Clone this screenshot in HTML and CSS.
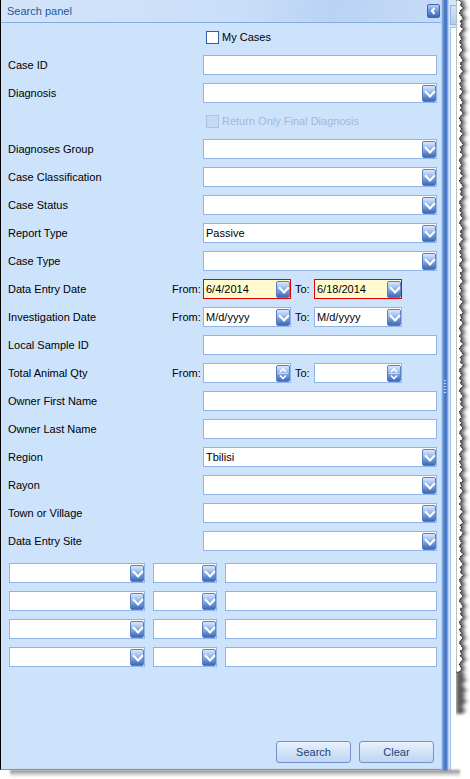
FILE: index.html
```html
<!DOCTYPE html>
<html>
<head>
<meta charset="utf-8">
<title>Search panel</title>
<link rel="stylesheet" href="styles.css">
</head>
<body>
<div class="frame">
  <div class="top">
    <div class="panel">
      <div class="header">
        <span class="title">Search panel</span>
        <span class="collapse"><svg width="9" height="10" viewBox="0 0 9 10"><polyline points="5.5,2 3,5 5.5,8" fill="none" stroke="#fff" stroke-width="2"/></svg></span>
      </div>
      <div class="form">
        <div class="row"><span></span><label class="check"><span class="box"></span>My Cases</label></div>
        <div class="row"><span>Case ID</span><div class="field"></div></div>
        <div class="row"><span>Diagnosis</span><div class="field"><span class="dd-btn"></span></div></div>
        <div class="row"><span></span><label class="check disabled"><span class="box"></span>Return Only Final Diagnosis</label></div>
        <div class="row"><span>Diagnoses Group</span><div class="field"><span class="dd-btn"></span></div></div>
        <div class="row"><span>Case Classification</span><div class="field"><span class="dd-btn"></span></div></div>
        <div class="row"><span>Case Status</span><div class="field"><span class="dd-btn"></span></div></div>
        <div class="row"><span>Report Type</span><div class="field">Passive<span class="dd-btn"></span></div></div>
        <div class="row"><span>Case Type</span><div class="field"><span class="dd-btn"></span></div></div>
        <div class="row wide"><span>Data Entry Date</span>
          <div class="range">
            <span class="from">From:</span><div class="field short invalid">6/4/2014<span class="dd-btn"></span></div>
            <span class="to">To:</span><div class="field short invalid">6/18/2014<span class="dd-btn"></span></div>
          </div>
        </div>
        <div class="row wide"><span>Investigation Date</span>
          <div class="range">
            <span class="from">From:</span><div class="field short">M/d/yyyy<span class="dd-btn"></span></div>
            <span class="to">To:</span><div class="field short">M/d/yyyy<span class="dd-btn"></span></div>
          </div>
        </div>
        <div class="row"><span>Local Sample ID</span><div class="field"></div></div>
        <div class="row wide"><span>Total Animal Qty</span>
          <div class="range">
            <span class="from">From:</span><div class="field short"><span class="spin-btn"><svg width="12" height="15" viewBox="0 0 12 15"><polyline points="3,6 6,3 9,6" fill="none" stroke="#fff" stroke-width="1.6"/><line x1="1" y1="7.5" x2="11" y2="7.5" stroke="#c9dbf5" stroke-width="1"/><polyline points="3,9.5 6,12.5 9,9.5" fill="none" stroke="#fff" stroke-width="1.6"/></svg></span></div>
            <span class="to">To:</span><div class="field short"><span class="spin-btn"><svg width="12" height="15" viewBox="0 0 12 15"><polyline points="3,6 6,3 9,6" fill="none" stroke="#fff" stroke-width="1.6"/><line x1="1" y1="7.5" x2="11" y2="7.5" stroke="#c9dbf5" stroke-width="1"/><polyline points="3,9.5 6,12.5 9,9.5" fill="none" stroke="#fff" stroke-width="1.6"/></svg></span></div>
          </div>
        </div>
        <div class="row"><span>Owner First Name</span><div class="field"></div></div>
        <div class="row"><span>Owner Last Name</span><div class="field"></div></div>
        <div class="row"><span>Region</span><div class="field">Tbilisi<span class="dd-btn"></span></div></div>
        <div class="row"><span>Rayon</span><div class="field"><span class="dd-btn"></span></div></div>
        <div class="row"><span>Town or Village</span><div class="field"><span class="dd-btn"></span></div></div>
        <div class="row"><span>Data Entry Site</span><div class="field"><span class="dd-btn"></span></div></div>
        <div class="grid">
          <div class="field"><span class="dd-btn"></span></div><div class="field"><span class="dd-btn"></span></div><div class="field"></div>
          <div class="field"><span class="dd-btn"></span></div><div class="field"><span class="dd-btn"></span></div><div class="field"></div>
          <div class="field"><span class="dd-btn"></span></div><div class="field"><span class="dd-btn"></span></div><div class="field"></div>
          <div class="field"><span class="dd-btn"></span></div><div class="field"><span class="dd-btn"></span></div><div class="field"></div>
        </div>
      </div>
      <div class="actions">
        <button class="btn">Search</button>
        <button class="btn">Clear</button>
      </div>
    </div>
    <div class="splitter"><span class="grip"></span></div>
    <div class="side">
      <div class="tab"></div>
      <div class="pane"></div>
    </div>
    <svg class="torn" width="14" height="776" viewBox="0 0 14 776">
      <defs><filter id="bl" x="-1" y="-0.1" width="3" height="1.2"><feGaussianBlur stdDeviation="1.4"/></filter></defs>
      <g transform="scale(1.6,1)">
      <path filter="url(#bl)" fill="#555" d="M4.2 0l1.5 3l-1 2l2 3l-1.5 2l-1 3l1 2l1.5 4l-2 2l1 3l-1 2l2 3l-1 2l-1.5 3l0.5 2l1 3l-1.5 3l1.5 3l-1 2l2 3l-1.5 2l-1 3l1 2l1.5 4l-2 2l1 3l-1 2l2 3l-1 2l-1.5 3l0.5 2l1 3l-1.5 3l1.5 3l-1 2l2 3l-1.5 2l-1 3l1 2l1.5 4l-2 2l1 3l-1 2l2 3l-1 2l-1.5 3l0.5 2l1 3l-1.5 3l1.5 3l-1 2l2 3l-1.5 2l-1 3l1 2l1.5 4l-2 2l1 3l-1 2l2 3l-1 2l-1.5 3l0.5 2l1 3l-1.5 3l1.5 3l-1 2l2 3l-1.5 2l-1 3l1 2l1.5 4l-2 2l1 3l-1 2l2 3l-1 2l-1.5 3l0.5 2l1 3l-1.5 3l1.5 3l-1 2l2 3l-1.5 2l-1 3l1 2l1.5 4l-2 2l1 3l-1 2l2 3l-1 2l-1.5 3l0.5 2l1 3l-1.5 3l1.5 3l-1 2l2 3l-1.5 2l-1 3l1 2l1.5 4l-2 2l1 3l-1 2l2 3l-1 2l-1.5 3l0.5 2l1 3l-1.5 3l1.5 3l-1 2l2 3l-1.5 2l-1 3l1 2l1.5 4l-2 2l1 3l-1 2l2 3l-1 2l-1.5 3l0.5 2l1 3l-1.5 3l1.5 3l-1 2l2 3l-1.5 2l-1 3l1 2l1.5 4l-2 2l1 3l-1 2l2 3l-1 2l-1.5 3l0.5 2l1 3l-1.5 3l1.5 3l-1 2l2 3l-1.5 2l-1 3l1 2l1.5 4l-2 2l1 3l-1 2l2 3l-1 2l-1.5 3l0.5 2l1 3l-1.5 3l1.5 3l-1 2l2 3l-1.5 2l-1 3l1 2l1.5 4l-2 2l1 3l-1 2l2 3l-1 2l-1.5 3l0.5 2l1 3l-1.5 3l1.5 3l-1 2l2 3l-1.5 2l-1 3l1 2l1.5 4l-2 2l1 3l-1 2l2 3l-1 2l-1.5 3l0.5 2l1 3l-1.5 3l1.5 3l-1 2l2 3l-1.5 2l-1 3l1 2l1.5 4l-2 2l1 3l-1 2l2 3l-1 2l-1.5 3l0.5 2l1 3l-1.5 3l1.5 3l-1 2l2 3l-1.5 2l-1 3l1 2l1.5 4l-2 2l1 3l-1 2l2 3l-1 2l-1.5 3l0.5 2l1 3l-1.5 3l1.5 3l-1 2l2 3l-1.5 2l-1 3l1 2l1.5 4l-2 2l1 3l-1 2l2 3l-1 2l-1.5 3l0.5 2l1 3l-1.5 3l1.5 3l-1 2l2 3l-1.5 2l-1 3l1 2l1.5 4l-2 2l1 3l-1 2l2 3l-1 2l-1.5 3l0.5 2l1 3l-1.5 3l1.5 3l-1 2l2 3l-1.5 2l-1 3l1 2l1.5 4l-2 2l1 3l-1 2l2 3l-1 2l-1.5 3l0.5 2l1 3l-1.5 3H0V0Z"/>
      <path fill="#fff" stroke="#000" stroke-width="1" stroke-dasharray="1 1" vector-effect="non-scaling-stroke" d="M2 0l1.5 3l-1 2l2 3l-1.5 2l-1 3l1 2l1.5 4l-2 2l1 3l-1 2l2 3l-1 2l-1.5 3l0.5 2l1 3l-1.5 3l1.5 3l-1 2l2 3l-1.5 2l-1 3l1 2l1.5 4l-2 2l1 3l-1 2l2 3l-1 2l-1.5 3l0.5 2l1 3l-1.5 3l1.5 3l-1 2l2 3l-1.5 2l-1 3l1 2l1.5 4l-2 2l1 3l-1 2l2 3l-1 2l-1.5 3l0.5 2l1 3l-1.5 3l1.5 3l-1 2l2 3l-1.5 2l-1 3l1 2l1.5 4l-2 2l1 3l-1 2l2 3l-1 2l-1.5 3l0.5 2l1 3l-1.5 3l1.5 3l-1 2l2 3l-1.5 2l-1 3l1 2l1.5 4l-2 2l1 3l-1 2l2 3l-1 2l-1.5 3l0.5 2l1 3l-1.5 3l1.5 3l-1 2l2 3l-1.5 2l-1 3l1 2l1.5 4l-2 2l1 3l-1 2l2 3l-1 2l-1.5 3l0.5 2l1 3l-1.5 3l1.5 3l-1 2l2 3l-1.5 2l-1 3l1 2l1.5 4l-2 2l1 3l-1 2l2 3l-1 2l-1.5 3l0.5 2l1 3l-1.5 3l1.5 3l-1 2l2 3l-1.5 2l-1 3l1 2l1.5 4l-2 2l1 3l-1 2l2 3l-1 2l-1.5 3l0.5 2l1 3l-1.5 3l1.5 3l-1 2l2 3l-1.5 2l-1 3l1 2l1.5 4l-2 2l1 3l-1 2l2 3l-1 2l-1.5 3l0.5 2l1 3l-1.5 3l1.5 3l-1 2l2 3l-1.5 2l-1 3l1 2l1.5 4l-2 2l1 3l-1 2l2 3l-1 2l-1.5 3l0.5 2l1 3l-1.5 3l1.5 3l-1 2l2 3l-1.5 2l-1 3l1 2l1.5 4l-2 2l1 3l-1 2l2 3l-1 2l-1.5 3l0.5 2l1 3l-1.5 3l1.5 3l-1 2l2 3l-1.5 2l-1 3l1 2l1.5 4l-2 2l1 3l-1 2l2 3l-1 2l-1.5 3l0.5 2l1 3l-1.5 3l1.5 3l-1 2l2 3l-1.5 2l-1 3l1 2l1.5 4l-2 2l1 3l-1 2l2 3l-1 2l-1.5 3l0.5 2l1 3l-1.5 3l1.5 3l-1 2l2 3l-1.5 2l-1 3l1 2l1.5 4l-2 2l1 3l-1 2l2 3l-1 2l-1.5 3l0.5 2l1 3l-1.5 3l1.5 3l-1 2l2 3l-1.5 2l-1 3l1 2l1.5 4l-2 2l1 3l-1 2l2 3l-1 2l-1.5 3l0.5 2l1 3l-1.5 3l1.5 3l-1 2l2 3l-1.5 2l-1 3l1 2l1.5 4l-2 2l1 3l-1 2l2 3l-1 2l-1.5 3l0.5 2l1 3l-1.5 3H0V0Z"/>
      </g>
    </svg>
  </div>
  <div class="shadow-b"></div>
</div>
</body>
</html>
```

FILE: styles.css
```css
* { box-sizing: border-box; }
html, body { margin: 0; padding: 0; background: #fff; }
body {
  font-family: "Liberation Sans", Arial, sans-serif;
  font-size: 11px;
  color: #000;
  width: 470px;
  height: 779px;
  overflow: hidden;
}
.frame { display: flex; flex-direction: column; }
.top { display: flex; height: 770px; align-items: flex-start; }

.panel {
  width: 441px;
  height: 770px;
  flex: none;
  border-left: 1px solid #000;
  border-bottom: 1px solid #7d98c0;
  background: #cde3fb;
  display: flex;
  flex-direction: column;
}
.header {
  height: 23px;
  flex: none;
  border-bottom: 1px solid #86abe2;
  background: linear-gradient(100deg, #d3e4f9 0%, #c9def8 55%, #b9d3f4 75%, #c6dbf6 100%);
  display: flex;
  align-items: center;
  padding: 0 1px 0 6px;
}
.title { color: #26589c; flex: 1; }
.collapse {
  width: 13px;
  height: 14px;
  border-radius: 2px;
  border: 1px solid #3f67ad;
  background: linear-gradient(#b3cdf3, #6390d8 55%, #3e68b7);
  display: flex;
  align-items: center;
  justify-content: center;
}

.form { display: flex; flex-direction: column; gap: 8px; padding: 4px 4px 0 7px; }
.row {
  display: grid;
  grid-template-columns: 195px 234px;
  align-items: center;
  height: 20px;
}
.row.wide { grid-template-columns: 164px 265px; }

.field {
  height: 20px;
  border: 1px solid #8fb4e8;
  background: #fff;
  display: flex;
  align-items: center;
  padding-left: 2px;
  white-space: nowrap;
}
.field.short { width: 88px; }
.field.invalid { background: #fffbcf; border-color: #e50000; }

.dd-btn, .spin-btn {
  margin-left: auto;
  width: 14px;
  height: 17px;
  flex: none;
  border-radius: 2px;
  border: 1px solid #5c7fbf;
  background: linear-gradient(to bottom, #dae8fc 0%, #a3c0ee 35%, #6590d4 70%, #3d67b7 100%);
  position: relative;
}
.dd-btn::after {
  content: "";
  position: absolute;
  left: 3px;
  top: 2px;
  width: 6px;
  height: 6px;
  border-right: 2px solid #fff;
  border-bottom: 2px solid #fff;
  transform: rotate(45deg);
}
.spin-btn svg { display: block; }

.range { display: flex; align-items: center; }
.from { width: 31px; }
.to { width: 23px; padding-left: 4px; }

.check { display: flex; align-items: center; gap: 3px; margin-left: 3px; }
.box {
  width: 13px;
  height: 13px;
  border: 1px solid #2f5ea9;
  background: #fff;
}
.check.disabled { color: #a2b8d8; }
.check.disabled .box { border-color: #a9c2e6; background: #c6daf4; }

.grid {
  display: grid;
  grid-template-columns: 136px 64px 212px;
  column-gap: 8px;
  row-gap: 8px;
  margin: 4px 0 0 1px;
}

.actions {
  margin-top: auto;
  display: flex;
  justify-content: flex-end;
  gap: 8px;
  padding: 0 7px 6px 0;
}
.btn {
  width: 75px;
  height: 22px;
  border: 1px solid #7391c7;
  border-radius: 3px;
  background: linear-gradient(#e9f1fd, #d3e3f8 50%, #bfd4f2);
  color: #1d3f7b;
  font-family: "Liberation Sans", Arial, sans-serif;
  font-size: 11px;
  padding: 0;
}

.splitter {
  width: 8px;
  height: 771px;
  flex: none;
  background: linear-gradient(to right, #b7cff0 0, #b7cff0 1px, #86aae0 1px, #5f8bd0 3px, #3e6dbf 4px, #5585cc 6px, #a5c2ec 7px, #c9dcf6 8px);
  display: flex;
  justify-content: center;
  padding-top: 380px;
}
.grip {
  width: 2px;
  height: 14px;
  background: repeating-linear-gradient(#c8dbf5 0, #c8dbf5 1px, transparent 1px, transparent 3px);
}

.side {
  width: 7px;
  height: 771px;
  flex: none;
  background: #d6e6fa;
  display: flex;
  flex-direction: column;
  padding: 5px 0 0 1px;
  gap: 2px;
}
.tab {
  height: 20px;
  border: 1px solid #93b4e4;
  border-right: none;
  background: linear-gradient(#d2e3f9, #b3cdf1);
}
.pane {
  flex: 1;
  background: #fff;
  border-left: 1px solid #a6c2ea;
  border-top: 1px solid #a6c2ea;
}

.torn { display: block; flex: none; }

.shadow-b {
  height: 7px;
  margin: 0 10px 0 10px;
  background: linear-gradient(#7a7a7a, #c8c8c8 50%, #fff);
  filter: blur(1px);
}
```
